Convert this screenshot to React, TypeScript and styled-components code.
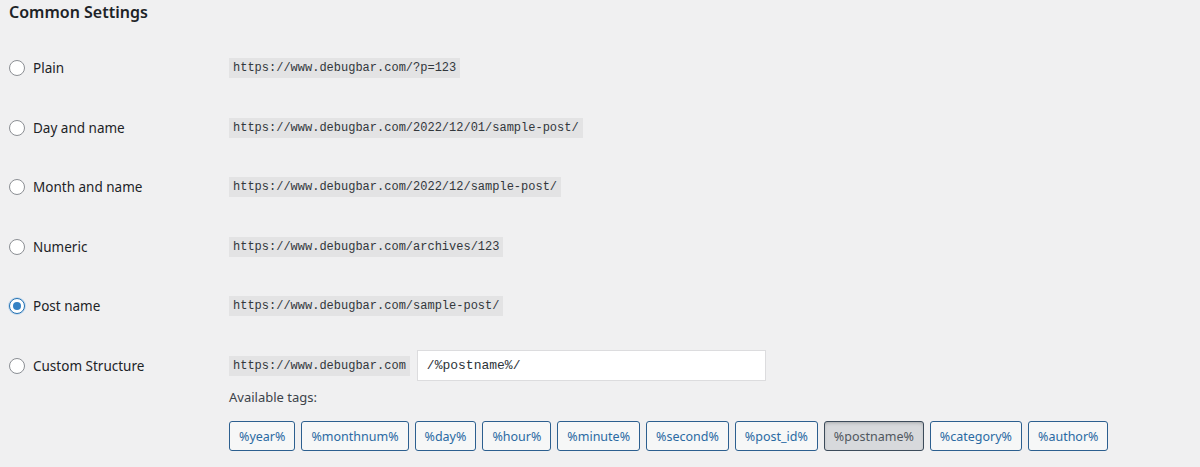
import React from "react";
import styled, { createGlobalStyle, css } from "styled-components";

const GlobalStyle = createGlobalStyle`
  html, body {
    margin: 0;
    padding: 0;
    background: #f0f0f1;
  }
  body {
    font-family: "Noto Sans", "Open Sans", sans-serif;
    color: #1d2327;
  }
`

const Page = styled.div`
  width: 1200px;
  height: 467px;
  box-sizing: border-box;
  padding: 0 0 0 9px;
  display: flex;
  flex-direction: column;
  gap: 28.5px;
  overflow: hidden;
`
const Title = styled.h2`
  margin: 0;
  font-size: 16px;
  line-height: 24px;
  font-weight: 600;
  color: #1d2327;
`
const Row = styled.div`
  display: grid;
  grid-template-columns: 220px 1fr;
  align-items: start;
`
const Label = styled.label`
  height: 31px;
  display: flex;
  align-items: center;
  gap: 8px;
  font-size: 13.5px;
  color: #1d2327;
`
const Radio = styled.span<{ $checked?: boolean }>`
  width: 16px;
  height: 16px;
  box-sizing: border-box;
  border-radius: 50%;
  border: 1px solid #8c8f94;
  background: #fff;
  display: flex;
  align-items: center;
  justify-content: center;
  ${(p) =>
    p.$checked &&
    css`
      border-color: #2271b1;
      box-shadow: 0 0 0 1px #c5d9ed;
      &::after {
        content: "";
        width: 8px;
        height: 8px;
        border-radius: 50%;
        background: #3582c4;
      }
    `}
`
const Value = styled.div`
  display: flex;
  flex-direction: column;
`
const Line = styled.div`
  height: 31px;
  display: flex;
  align-items: center;
  gap: 7px;
`
const Code = styled.code`
  font-family: "Liberation Mono", "DejaVu Sans Mono", monospace;
  font-size: 12px;
  line-height: 15px;
  padding: 3px 4px 2px;
  background: #e3e3e4;
  color: #32373c;
`
const Input = styled.input`
  width: 349px;
  height: 31px;
  box-sizing: border-box;
  border: 1px solid #dcdcde;
  border-radius: 0;
  background: #fff;
  padding: 0 9px;
  font-family: "Liberation Mono", "DejaVu Sans Mono", monospace;
  font-size: 13px;
  color: #2c3338;
  outline: none;
`
const Hint = styled.div`
  margin-top: 6px;
  font-size: 13px;
  line-height: 20px;
  color: #3c434a;
`
const Tags = styled.div`
  margin-top: 14px;
  display: flex;
  gap: 6px;
`
const Tag = styled.button<{ $active?: boolean }>`
  height: 30px;
  box-sizing: border-box;
  padding: 0 9px;
  border: 1px solid #2c5f8f;
  border-radius: 3px;
  background: #f6f7f7;
  color: #2a6aa3;
  font-family: "Noto Sans", "Open Sans", sans-serif;
  font-size: 12.5px;
  cursor: pointer;
  ${(p) =>
    p.$active &&
    css`
      background: #d7d9dc;
      border-color: #3c4b5a;
      color: #50575e;
      box-shadow: inset 0 2px 5px -3px rgba(0, 0, 0, 0.5);
    `}
`

const options = [
  { label: "Plain", url: "https://www.debugbar.com/?p=123" },
  { label: "Day and name", url: "https://www.debugbar.com/2022/12/01/sample-post/" },
  { label: "Month and name", url: "https://www.debugbar.com/2022/12/sample-post/" },
  { label: "Numeric", url: "https://www.debugbar.com/archives/123" },
  { label: "Post name", url: "https://www.debugbar.com/sample-post/", checked: true },
]

const tags = [
  "%year%",
  "%monthnum%",
  "%day%",
  "%hour%",
  "%minute%",
  "%second%",
  "%post_id%",
  "%postname%",
  "%category%",
  "%author%",
]

export default function App() {
  return (
    <>
      <GlobalStyle />
      <Page>
        <Title>Common Settings</Title>
        {options.map((o) => (
          <Row key={o.label}>
            <Label>
              <Radio $checked={o.checked} />
              {o.label}
            </Label>
            <Line>
              <Code>{o.url}</Code>
            </Line>
          </Row>
        ))}
        <Row>
          <Label>
            <Radio />
            Custom Structure
          </Label>
          <Value>
            <Line>
              <Code>https://www.debugbar.com</Code>
              <Input defaultValue="/%postname%/" />
            </Line>
            <Hint>Available tags:</Hint>
            <Tags>
              {tags.map((t) => (
                <Tag key={t} $active={t === "%postname%"}>
                  {t}
                </Tag>
              ))}
            </Tags>
          </Value>
        </Row>
      </Page>
    </>
  );
}
